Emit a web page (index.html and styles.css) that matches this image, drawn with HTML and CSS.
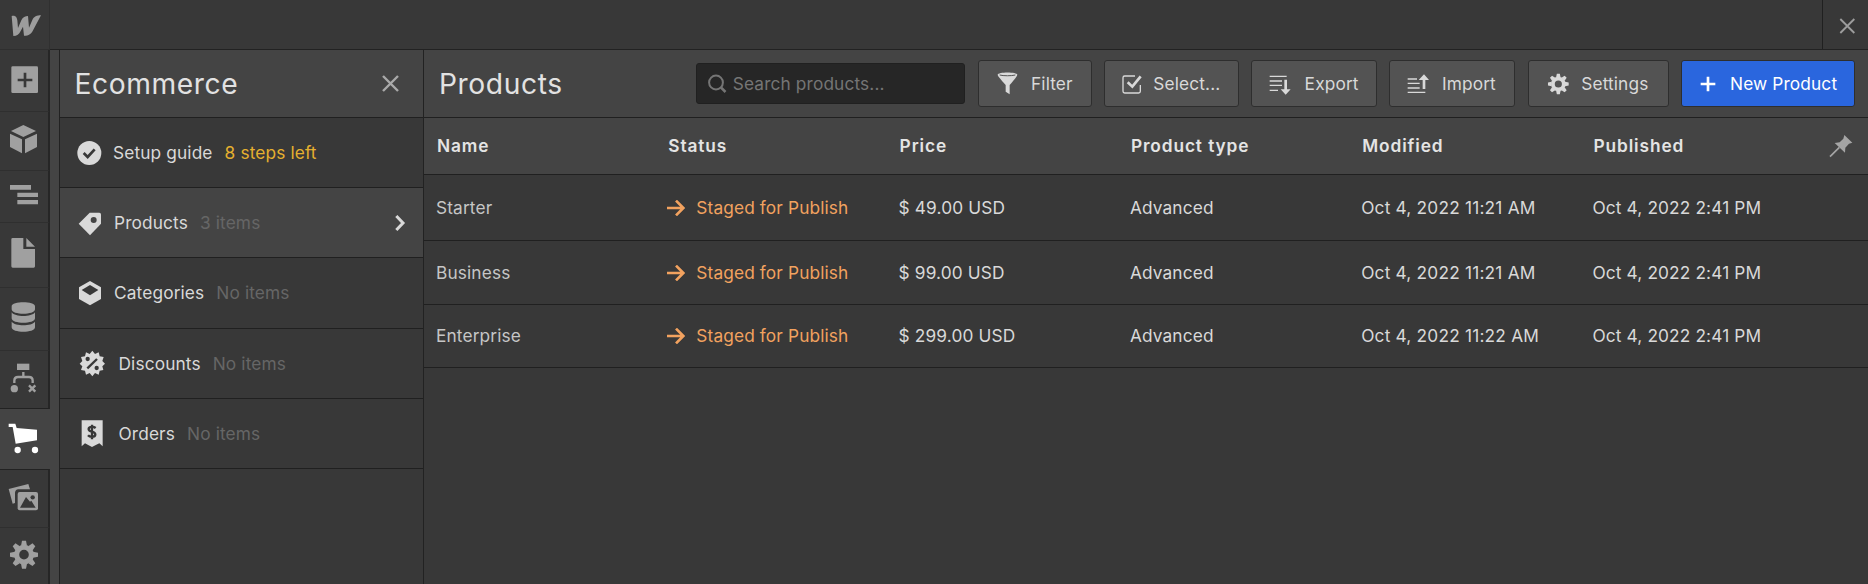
FILE: index.html
```html
<!DOCTYPE html>
<html lang="en">
<head>
<meta charset="utf-8">
<title>Ecommerce – Products</title>
<link rel="stylesheet" href="styles.css">
</head>
<body>
<svg class="defs" width="0" height="0" aria-hidden="true">
  <defs>
    <g id="gear">
      <circle r="22" fill="none" stroke="currentColor" stroke-width="15"/>
      <g fill="currentColor">
        <path id="tooth" d="M-9-27L-6-42H6L9-27Z"/>
        <use href="#tooth" transform="rotate(45)"/><use href="#tooth" transform="rotate(90)"/>
        <use href="#tooth" transform="rotate(135)"/><use href="#tooth" transform="rotate(180)"/>
        <use href="#tooth" transform="rotate(225)"/><use href="#tooth" transform="rotate(270)"/>
        <use href="#tooth" transform="rotate(315)"/>
      </g>
    </g>
    <g id="arrow" fill="none" stroke="currentColor" stroke-width="8"><path d="M0 24H48M27 2L49 24L27 46"/></g>
  </defs>
</svg>
<header class="topbar">
  <div class="logo"><svg width="49" height="49" viewBox="0 0 147 147"><path fill="currentColor" d="M35 48C47 45 51 53 52 61L54 84L64 61C68 51 76 48 84 48L87 83L97 60C101 50 111 46 123 46L100 89C94 101 87 107 72 107L69 80L62 93C57 103 51 108 40 108Z"/></svg></div>
  <button class="top-close" aria-label="Close"><svg width="45" height="49" viewBox="1269 0 135 147"><path d="M1321 57L1363 99M1363 57L1321 99" stroke="currentColor" stroke-width="5.500"/></svg></button>
</header>
<div class="workspace">
  <nav class="rail">
    <a class="cell c1"><svg width="48" height="61" viewBox="0 150 144 183"><rect x="34" y="199" width="80" height="80" rx="4" fill="currentColor"/><path d="M53 240H97M75 218V262" stroke="#383838" stroke-width="8"/></svg></a>
    <a class="cell c2"><svg width="48" height="58" viewBox="0 336 144 174"><path fill="currentColor" d="M70 375L108 393L70 411L33 393ZM30 401L66 418V460L30 441ZM111 401L75 418V460L111 441Z"/></svg></a>
    <a class="cell c3"><svg width="48" height="51" viewBox="0 513 144 153"><path fill="currentColor" d="M30 555H93V569H30ZM52 578H114V591H52ZM52 600H114V613H52Z"/></svg></a>
    <a class="cell c4"><svg width="48" height="64" viewBox="0 669 144 192"><path fill="currentColor" d="M38 714H70V747H105V799Q105 803 101 803H38Q34 803 34 799V718Q34 714 38 714ZM79 714L105 740H79Z"/></svg></a>
    <a class="cell c5"><svg width="48" height="62" viewBox="0 -6 144 186"><path fill="currentColor" d="M35 49C35 33 105 33 105 49V58C105 76 35 76 35 58ZM35 67C45 82 95 82 105 67V85C105 103 35 103 35 85ZM35 95C45 109 95 109 105 95V112C105 130 35 130 35 112Z"/></svg></a>
    <a class="cell c6"><svg width="48" height="57" viewBox="0 183 144 171"><rect x="51" y="221" width="37" height="19" fill="currentColor"/><circle cx="43" cy="296" r="11" fill="currentColor"/><g fill="none" stroke="currentColor" stroke-width="7"><path d="M70 246V260M43 279V272Q43 261 54 261H87Q98 261 98 272V279"/><path d="M87 286L106 305M106 286L87 305"/></g></svg></a>
    <a class="cell active"><svg width="48" height="60" viewBox="0 357 144 180"><path fill="currentColor" d="M26 401H46L50 414L111 419V451L47 461L38 411H26Z"/><circle cx="53" cy="480" r="9.500" fill="currentColor"/><circle cx="105" cy="480" r="9.500" fill="currentColor"/></svg></a>
    <a class="cell c8"><svg width="48" height="57" viewBox="0 540 144 171"><path fill="currentColor" d="M26 597L85 582L90 598H55Q46 599 45 608V639L38 641Z"/><rect x="53" y="606" width="61" height="55" rx="6" fill="currentColor"/><path d="M60 653L78 621L90 635L94 632L107 653Z" fill="#383838"/><circle cx="98" cy="622" r="6.500" fill="#383838"/></svg></a>
    <a class="cell c9"><svg width="48" height="56" viewBox="0 714 144 168"><use href="#gear" x="72" y="794"/></svg></a>
  </nav>
  <aside class="panel">
    <div class="panel-head"><h1>Ecommerce</h1><button class="close" aria-label="Close panel"><svg width="17" height="17" viewBox="0 0 17 17"><path d="M1 1L16 16M16 1L1 16" stroke="currentColor" stroke-width="2.400"/></svg></button></div>
    <ul class="menu">
      <li class="r1"><svg width="40" height="40" viewBox="48 278 120 120"><circle cx="118" cy="338" r="36" fill="currentColor"/><path d="M101 338L113 350L134 327" fill="none" stroke="#383838" stroke-width="8"/></svg><span>Setup guide</span><span class="steps">8 steps left</span></li>
      <li class="r2 selected"><svg width="40" height="40" viewBox="48 488 120 120"><path fill="currentColor" d="M119 517H148Q153 517 153 522V550L120 585L86 550Z"/><circle cx="131" cy="539" r="9" fill="#444"/></svg><span>Products</span><span class="count">3 items</span><svg class="chevron" width="12" height="18" viewBox="1032 521 36 54"><path d="M1039 527L1059 548L1039 569" fill="none" stroke="currentColor" stroke-width="9"/></svg></li>
      <li class="r3"><svg width="40" height="40" viewBox="48 68 120 120"><path fill="currentColor" d="M120 92L153 111V146L120 165L87 146V111Z"/><path d="M95 119L120 104L145 119L120 135Z" fill="#383838"/></svg><span>Categories</span><span class="count">No items</span></li>
      <li class="r4"><svg width="40" height="40" viewBox="48 278 120 120"><path fill="currentColor" d="M127 301L135 311L146 306L149 318L161 320L157 332L165 340L157 348L160 359L149 361L146 373L135 368L127 378L119 368L108 373L105 361L93 359L97 348L89 340L97 332L93 320L105 318L108 306L119 311Z"/><path d="M112 354L141 326" stroke="#383838" stroke-width="7"/><circle cx="113" cy="326" r="6.500" fill="#383838"/><circle cx="140" cy="353" r="6.500" fill="#383838"/></svg><span>Discounts</span><span class="count">No items</span></li>
      <li class="r5"><svg width="40" height="40" viewBox="48 489 120 120"><path fill="currentColor" d="M95 511H158V589L148 580L136 586L126 591L116 586L105 580L95 589Z"/><path d="M137 534C130 528 115 529 116 538C117 547 137 543 136 554C135 563 119 562 114 556M126 524V568" fill="none" stroke="#383838" stroke-width="7"/></svg><span>Orders</span><span class="count">No items</span></li>
    </ul>
  </aside>
  <main class="main">
    <div class="toolbar">
      <h2>Products</h2>
      <label class="search"><svg width="20" height="20" viewBox="0 0 20 20"><circle cx="9" cy="8.500" r="6.900" fill="none" stroke="currentColor" stroke-width="2"/><path d="M14 13.500L18.500 18" stroke="currentColor" stroke-width="2.500"/></svg><span>Search products...</span></label>
      <button class="btn b1"><svg width="48" height="40" viewBox="57 71 144 120"><path fill="currentColor" d="M113 103C113 94 172 94 172 103C171 108 165 115 149 134V162L137 154V134C120 114 114 108 113 103Z"/><path d="M119 104C130 107 154 107 166 104" fill="none" stroke="#535353" stroke-width="3"/></svg><span>Filter</span></button>
      <button class="btn b2"><svg width="44" height="40" viewBox="435 71 132 120"><path d="M525 107H494Q489 107 489 112V153Q489 158 494 158H536Q541 158 541 153V134" fill="none" stroke="currentColor" stroke-width="4"/><path d="M503 126L517 139L542 108" fill="none" stroke="currentColor" stroke-width="8"/></svg><span>Select...</span></button>
      <button class="btn b3"><svg width="48" height="40" viewBox="876 71 144 120"><path d="M929 108H980M929 122H966M929 135H966M929 150H954" stroke="currentColor" stroke-width="4"/><path fill="currentColor" d="M973 118H981V147H992L977 163L962 147H973Z"/></svg><span>Export</span></button>
      <button class="btn b4"><svg width="48" height="40" viewBox="-29 192 144 120"><path d="M24 237H52M24 250H60M24 264H60M24 277H77" stroke="currentColor" stroke-width="4"/><path fill="currentColor" d="M69 267H77V240H88L73 223L57 240H69Z"/></svg><span>Import</span></button>
      <button class="btn b5"><svg width="48" height="40" viewBox="384 192 144 120"><use href="#gear" transform="translate(472 252) scale(.74)"/></svg><span>Settings</span></button>
      <button class="btn b6"><svg width="44" height="40" viewBox="846 192 132 120"><path d="M902 252H946M924 230V274" stroke="currentColor" stroke-width="8"/></svg><span>New Product</span></button>
    </div>
    <div class="grid head"><span>Name</span><span>Status</span><span>Price</span><span>Product type</span><span>Modified</span><span>Published</span><svg class="pin" width="26" height="26" viewBox="1284 399 78 78"><path fill="currentColor" d="M1333 405L1357 428L1347 431L1336 443L1335 458L1304 429L1319 427L1330 416Z"/><path d="M1290 470L1318 442" stroke="currentColor" stroke-width="5"/></svg></div>
    <div class="grid row a"><span class="name">Starter</span><span class="status"><svg width="18" height="16" viewBox="0 0 54 48"><use href="#arrow"/></svg><span>Staged for Publish</span></span><span>$ 49.00 USD</span><span>Advanced</span><span class="modified">Oct 4, 2022 11:21 AM</span><span>Oct 4, 2022 2:41 PM</span></div>
    <div class="grid row b"><span class="name">Business</span><span class="status"><svg width="18" height="16" viewBox="0 0 54 48"><use href="#arrow"/></svg><span>Staged for Publish</span></span><span>$ 99.00 USD</span><span>Advanced</span><span class="modified">Oct 4, 2022 11:21 AM</span><span>Oct 4, 2022 2:41 PM</span></div>
    <div class="grid row c"><span class="name">Enterprise</span><span class="status"><svg width="18" height="16" viewBox="0 0 54 48"><use href="#arrow"/></svg><span>Staged for Publish</span></span><span>$ 299.00 USD</span><span>Advanced</span><span class="modified">Oct 4, 2022 11:22 AM</span><span>Oct 4, 2022 2:41 PM</span></div>
  </main>
</div>
</body>
</html>
```
FILE: styles.css
```css
* { box-sizing: border-box; }
body { margin: 0; height: 584px; display: flex; flex-direction: column; overflow: hidden; background: #383838; color: #d9d9d9; font: 17.3px/24px Inter, "Liberation Sans", sans-serif; letter-spacing: .13px; }
svg { display: block; flex: none; }
.defs { position: absolute; }
h1, h2, ul { margin: 0; padding: 0; font-weight: 400; list-style: none; }
button { padding: 0; border: 0; background: none; color: inherit; font: inherit; letter-spacing: inherit; }
span { white-space: nowrap; }

.topbar { height: 50px; flex: none; display: flex; justify-content: space-between; border-bottom: 1px solid #222; color: #9d9d9d; }
.logo { width: 50px; height: 50px; border-right: 1px solid #303030; border-bottom: 1px solid #2f2f2f; background: #383838; }
.top-close { border-left: 1px solid #202020; width: 46px; }
.workspace { flex: 1; display: flex; min-height: 0; }

.rail { width: 60px; background: #444; border-right: 1px solid #222; color: #a0a0a0; }
.cell { display: block; width: 50px; background: #383838; border-right: 2px solid #262626; border-bottom: 1px solid #2f2f2f; }
.cell.c6 { border-bottom-color: #222; }
.cell.active { background: #444; border: 0; color: #fff; height: 60px; }
.cell.c8 { border-top: 1px solid #222; }
.cell.c9 { border-bottom: 0; }

.panel { width: 364px; border-right: 1px solid #222; }
.panel-head { height: 68px; display: flex; align-items: center; justify-content: space-between; padding: 0 24px 0 14.500px; background: #444; border-bottom: 1px solid #202020; color: #e2e2e2; }
h1, h2 { font-size: 28.200px; line-height: 36px; letter-spacing: .6px; }
.close { color: #a9a9a9; }
.menu li { height: 70.200px; display: flex; align-items: center; padding-left: 6px; border-bottom: 1px solid #202020; }
.menu .selected { background: #444; }
.menu svg + span { margin-left: 8px; }
.menu .r1 svg + span { margin-left: 7px; }
.menu .r4 svg + span, .menu .r5 svg + span { margin-left: 12.500px; }
.menu .r4 span, .menu .r5 span { padding-top: 1px; }
.menu span + span { margin-left: 12px; }
.steps { color: #e5b02f; }
.count { color: #666; }
.chevron { margin: 0 17px 0 auto; }

.main { flex: 1; min-width: 0; }
.toolbar { height: 68px; display: flex; align-items: center; background: #444; border-bottom: 1px solid #202020; padding: 0 13px 0 15px; gap: 12.300px; }
h2 { color: #e2e2e2; margin-right: auto; }
.search { width: 269px; height: 41px; display: flex; align-items: center; background: #262626; border: 1px solid #202020; border-radius: 3px; color: #757575; padding-left: 10px; gap: 5.500px; }
.btn { height: 47px; display: flex; align-items: center; background: #535353; border: 1px solid #2e2e2e; border-radius: 3px; gap: 4.500px; }
.b1 { width: 114px; } .b2 { width: 135px; } .b3 { width: 126px; } .b4 { width: 126px; } .b5 { width: 141px; }
.b4 { gap: 3.500px; }
.b6 { width: 174px; background: #2a66de; color: #fff; gap: 4px; }

.grid { display: grid; grid-template-columns: repeat(5, 231.300px) 1fr auto; align-items: center; padding-left: 12px; border-bottom: 1px solid #202020; height: 64px; }
.head { height: 57px; background: #444; font-weight: 600; color: #e4e4e4; padding-left: 13px; letter-spacing: .9px; }
.pin { margin-right: 14px; color: #a5a5a5; }
.row.a { height: 66px; }
.row.c { height: 63px; }
.name { color: #c6c6c6; }
.modified { letter-spacing: .2px; }
.status { display: flex; align-items: center; gap: 11px; color: #f2a25f; }
```
